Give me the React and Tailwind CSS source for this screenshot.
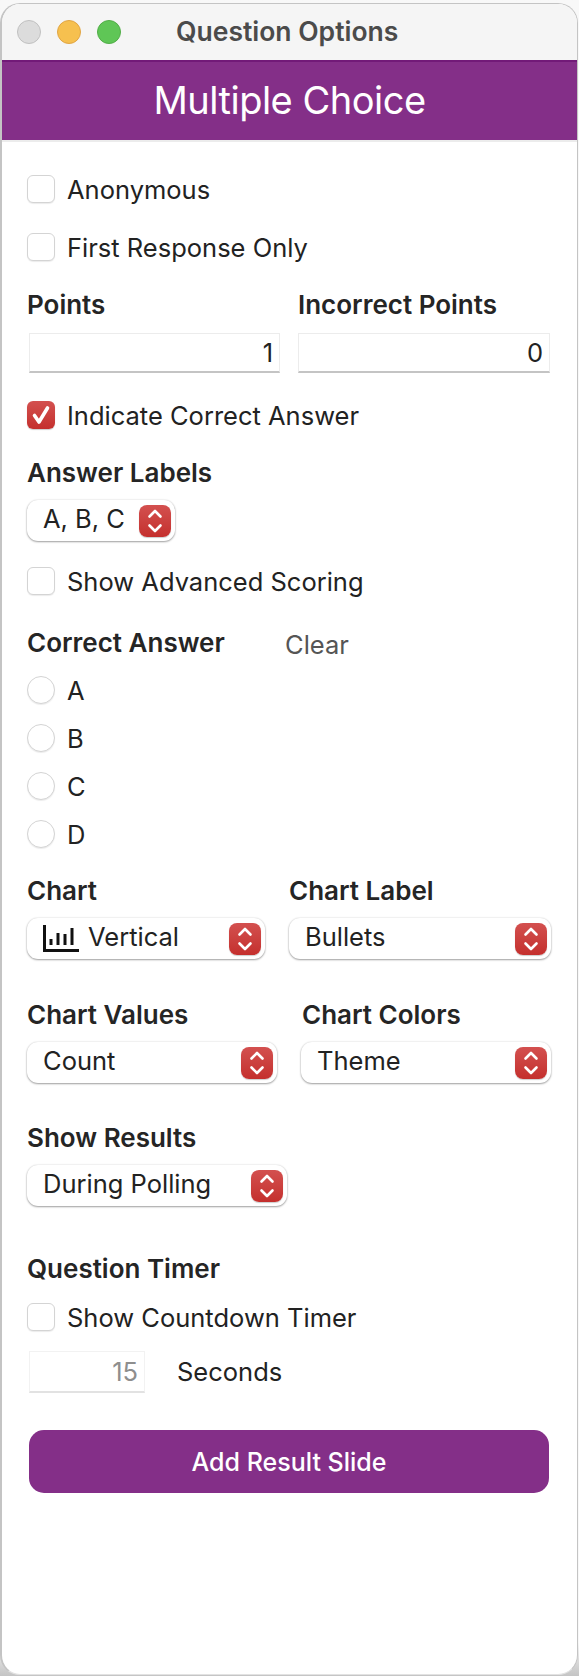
import React from 'react';

function Stepper() {
  return (
    <span className="flex h-[32px] w-[32px] shrink-0 items-center justify-center rounded-[8px] bg-linear-to-b from-[#d3504f] to-[#c42f2d] shadow-[0_1px_1px_rgba(0,0,0,0.2)]">
      <svg width="16" height="26" viewBox="0 0 16 26" fill="none" stroke="white" strokeWidth="2.6" strokeLinecap="round" strokeLinejoin="round">
        <path d="M2.5 8.5 8 3l5.5 5.5" />
        <path d="M2.5 17.5 8 23l5.5-5.5" />
      </svg>
    </span>
  );
}

function Select({ label, icon, className = '' }) {
  return (
    <div className={`flex h-[41px] items-center justify-between rounded-[11px] bg-white pl-[16px] pr-[4px] text-[#222] shadow-[0_1px_2px_rgba(0,0,0,0.35),0_0_2px_rgba(0,0,0,0.15)] ${className}`}>
      <span className="flex items-center gap-[9px]">
        {icon}
        <span className="pb-[3px]">{label}</span>
      </span>
      <Stepper />
    </div>
  );
}

function Check({ label, checked, className = '' }) {
  return (
    <div className={`flex h-[28px] items-center gap-[12px] text-[#222] ${className}`}>
      {checked ? (
        <span className="flex h-[28px] w-[28px] items-center justify-center rounded-[6px] bg-linear-to-b from-[#d3504f] to-[#c42f2d] shadow-[0_1px_1px_rgba(0,0,0,0.2)]">
          <svg width="22" height="22" viewBox="0 0 22 22" fill="none" stroke="white" strokeWidth="3.6" strokeLinecap="round" strokeLinejoin="round">
            <path d="M4.5 11.5 9 18 17.5 4" />
          </svg>
        </span>
      ) : (
        <span className="h-[28px] w-[28px] rounded-[6px] border border-[#d4d4d4] bg-white shadow-[0_1px_1px_rgba(0,0,0,0.08)]" />
      )}
      <span className="pt-[2px]">{label}</span>
    </div>
  );
}

function Radio({ label }) {
  return (
    <div className="flex h-[28px] items-center gap-[12px] text-[#222]">
      <span className="h-[28px] w-[28px] rounded-full border border-[#d4d4d4] bg-white shadow-[0_1px_1px_rgba(0,0,0,0.08)]" />
      <span className="pt-[2px]">{label}</span>
    </div>
  );
}

function Heading({ children, className = '' }) {
  return <div className={`h-[30px] text-[26px] font-semibold leading-[30px] text-[#252525] ${className}`}>{children}</div>;
}

function NumberBox({ value, className = '' }) {
  return (
    <div className={`flex h-[40px] items-center justify-end border border-b-2 border-[#ececec] border-b-[#c4c4c4] bg-white pr-[6px] text-[#222] ${className}`}>
      {value}
    </div>
  );
}

function BarsIcon() {
  return (
    <svg width="36" height="27" viewBox="0 0 36 27" fill="none" stroke="#111" strokeLinecap="butt">
      <path d="M1.5 0v25.5H36" strokeWidth="3" />
      <path d="M8 14v6M15 8v12M22 9v11M29 3v17" strokeWidth="3" />
    </svg>
  );
}

export default function App() {
  return (
    <div className="h-[1676px] w-[579px] bg-linear-to-b from-[#f8f8f8] from-[98%] to-[#c4c4c4] pr-[1px] pt-[3px] text-[25.5px] leading-[30px] [font-family:Inter,'Liberation_Sans',sans-serif]">
      <div className="h-[1672px] overflow-hidden rounded-[20px] border-b border-l-2 border-r border-t border-[#c4c4c4] border-b-[#e2e2e2] bg-white">
        <div className="relative h-[56px] bg-[#f5f5f5]">
          <div className="flex gap-[16px] pl-[15px] pt-[16px]">
            <span className="h-[24px] w-[24px] rounded-full border border-[#c0c0c0] bg-[#dcdcdc]" />
            <span className="h-[24px] w-[24px] rounded-full border border-[#e0a545] bg-[#f6c04f]" />
            <span className="h-[24px] w-[24px] rounded-full border border-[#52ad48] bg-[#5fc656]" />
          </div>
          <div className="absolute left-[174px] top-[12px] text-[26.5px] font-semibold leading-[30px] text-[#4b4b4b]">Question Options</div>
        </div>
        <div className="flex h-[82px] items-center justify-center border-b-2 border-t-2 border-b-[#ececec] border-t-[#721a78] bg-[#842f88] pb-[2px] text-[38px] tracking-[-0.5px] text-white">
          Multiple Choice
        </div>

        <div className="pl-[25px] pr-[26px]">
          <Check label="Anonymous" className="mt-[33px]" />
          <Check label="First Response Only" className="mt-[30px]" />

          <div className="mt-[29px] flex">
            <Heading className="w-[271px]">Points</Heading>
            <Heading>Incorrect Points</Heading>
          </div>
          <div className="ml-[2px] mt-[13px] flex gap-[18px]">
            <NumberBox value="1" className="w-[251px]" />
            <NumberBox value="0" className="w-[252px]" />
          </div>

          <Check label="Indicate Correct Answer" checked className="mt-[28px]" />

          <Heading className="mt-[29px]">Answer Labels</Heading>
          <Select label="A, B, C" className="mt-[12px] w-[148px]" />

          <Check label="Show Advanced Scoring" className="mt-[26px]" />

          <div className="mt-[33px] flex h-[30px]">
            <Heading className="w-[258px]">Correct Answer</Heading>
            <span className="pt-[2px] text-[#555]">Clear</span>
          </div>
          <div className="mt-[18px] flex flex-col gap-[20px]">
            <Radio label="A" />
            <Radio label="B" />
            <Radio label="C" />
            <Radio label="D" />
          </div>

          <div className="mt-[28px] flex">
            <Heading className="w-[262px]">Chart</Heading>
            <Heading>Chart Label</Heading>
          </div>
          <div className="mt-[12px] flex gap-[24px]">
            <Select label="Vertical" icon={<BarsIcon />} className="w-[238px]" />
            <Select label="Bullets" className="w-[262px]" />
          </div>

          <div className="mt-[41px] flex">
            <Heading className="w-[275px]">Chart Values</Heading>
            <Heading>Chart Colors</Heading>
          </div>
          <div className="mt-[12px] flex gap-[24px]">
            <Select label="Count" className="w-[250px]" />
            <Select label="Theme" className="w-[250px]" />
          </div>

          <Heading className="mt-[40px]">Show Results</Heading>
          <Select label="During Polling" className="mt-[12px] w-[260px]" />

          <Heading className="mt-[48px]">Question Timer</Heading>
          <Check label="Show Countdown Timer" className="mt-[19px]" />
          <div className="mt-[20px] flex items-center">
            <div className="ml-[2px] flex h-[42px] w-[116px] items-center justify-end border border-b-2 border-[#f2f2f2] border-b-[#e2e2e2] pr-[6px] text-[#8e8e8e]">15</div>
            <span className="ml-[32px] text-[#222]">Seconds</span>
          </div>

          <button className="ml-[2px] mt-[37px] flex h-[63px] w-[520px] items-center justify-center rounded-[15px] bg-[#842f88] text-[25px] font-medium text-white">
            Add Result Slide
          </button>
        </div>
      </div>
    </div>
  );
}
